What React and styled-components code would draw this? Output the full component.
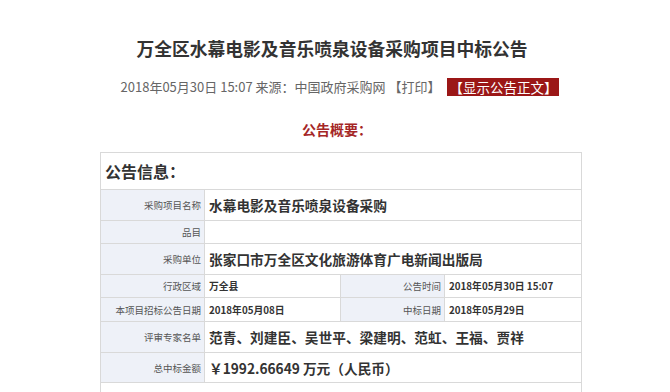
import React from "react";
import styled, { createGlobalStyle } from "styled-components";

const GlobalStyle = createGlobalStyle`
  body {
    margin: 0;
    background: #ffffff;
    font-family: "Noto Sans CJK SC", "Noto Sans", sans-serif;
  }
`;

const Page = styled.div`
  width: 670px;
  height: 392px;
  overflow: hidden;
  display: flex;
  flex-direction: column;
  padding-top: 34px;
  box-sizing: border-box;
`;

const Title = styled.h1`
  margin: 0;
  padding-right: 6px;
  font-size: 17.8px;
  line-height: 28px;
  font-weight: bold;
  color: #333333;
  text-align: center;
`;

const Meta = styled.div`
  margin-top: 16px;
  display: flex;
  justify-content: center;
  align-items: center;
  gap: 7px;
  padding-left: 10px;
  font-size: 13px;
  line-height: 18px;
  color: #666666;
`;

const ShowButton = styled.span`
  background: #9b1717;
  color: #ffffff;
  padding: 0 2px;
  font-size: 13.5px;
  line-height: 18px;
`;

const Summary = styled.div`
  margin-top: 24px;
  text-align: center;
  padding-left: 4px;
  font-size: 14px;
  line-height: 18px;
  font-weight: bold;
  color: #a52626;
`;

const Table = styled.table`
  margin-top: 14px;
  margin-left: 100px;
  width: 481px;
  border-collapse: collapse;
  table-layout: fixed;
  border: 1px solid #d9d9d9;
`;

const HeadCell = styled.td`
  border: 1px solid #d9d9d9;
  height: 36px;
  padding: 0 4px;
  font-size: 16px;
  font-weight: bold;
  color: #333333;
`;

const Label = styled.td`
  border: 1px solid #d9d9d9;
  background: #eef1f8;
  text-align: right;
  padding: 0 3px 0 0;
  height: ${(p) => p.$h}px;
  font-size: 9.5px;
  color: #555555;
  white-space: nowrap;
`;

const Value = styled.td`
  border: 1px solid #d9d9d9;
  padding: 0 4px;
  height: ${(p) => p.$h}px;
  font-size: ${(p) => (p.$small ? "9.8px" : "13.7px")};
  font-weight: bold;
  color: #333333;
  white-space: nowrap;
`;

const EmptyCell = styled.td`
  border: 1px solid #d9d9d9;
  height: 30px;
`;

export default function App() {
  return (
    <Page>
      <GlobalStyle />
      <Title>万全区水幕电影及音乐喷泉设备采购项目中标公告</Title>
      <Meta>
        <span>2018年05月30日 15:07 来源：中国政府采购网 【打印】</span>
        <ShowButton>【显示公告正文】</ShowButton>
      </Meta>
      <Summary>公告概要：</Summary>
      <Table>
        <colgroup>
          <col style={{ width: 104 }} />
          <col style={{ width: 136 }} />
          <col style={{ width: 104 }} />
          <col style={{ width: 137 }} />
        </colgroup>
        <tbody>
          <tr>
            <HeadCell colSpan={4}>公告信息：</HeadCell>
          </tr>
          <tr>
            <Label $h={30}>采购项目名称</Label>
            <Value $h={30} colSpan={3}>水幕电影及音乐喷泉设备采购</Value>
          </tr>
          <tr>
            <Label $h={22}>品目</Label>
            <Value $h={22} colSpan={3}></Value>
          </tr>
          <tr>
            <Label $h={30}>采购单位</Label>
            <Value $h={30} colSpan={3}>张家口市万全区文化旅游体育广电新闻出版局</Value>
          </tr>
          <tr>
            <Label $h={22}>行政区域</Label>
            <Value $h={22} $small>万全县</Value>
            <Label $h={22}>公告时间</Label>
            <Value $h={22} $small>2018年05月30日 15:07</Value>
          </tr>
          <tr>
            <Label $h={23}>本项目招标公告日期</Label>
            <Value $h={23} $small>2018年05月08日</Value>
            <Label $h={23}>中标日期</Label>
            <Value $h={23} $small>2018年05月29日</Value>
          </tr>
          <tr>
            <Label $h={30}>评审专家名单</Label>
            <Value $h={30} colSpan={3}>范青、刘建臣、吴世平、梁建明、范虹、王福、贾祥</Value>
          </tr>
          <tr>
            <Label $h={29}>总中标金额</Label>
            <Value $h={29} colSpan={3}>￥1992.66649 万元（人民币）</Value>
          </tr>
          <tr>
            <EmptyCell colSpan={4} />
          </tr>
        </tbody>
      </Table>
    </Page>
  );
}
